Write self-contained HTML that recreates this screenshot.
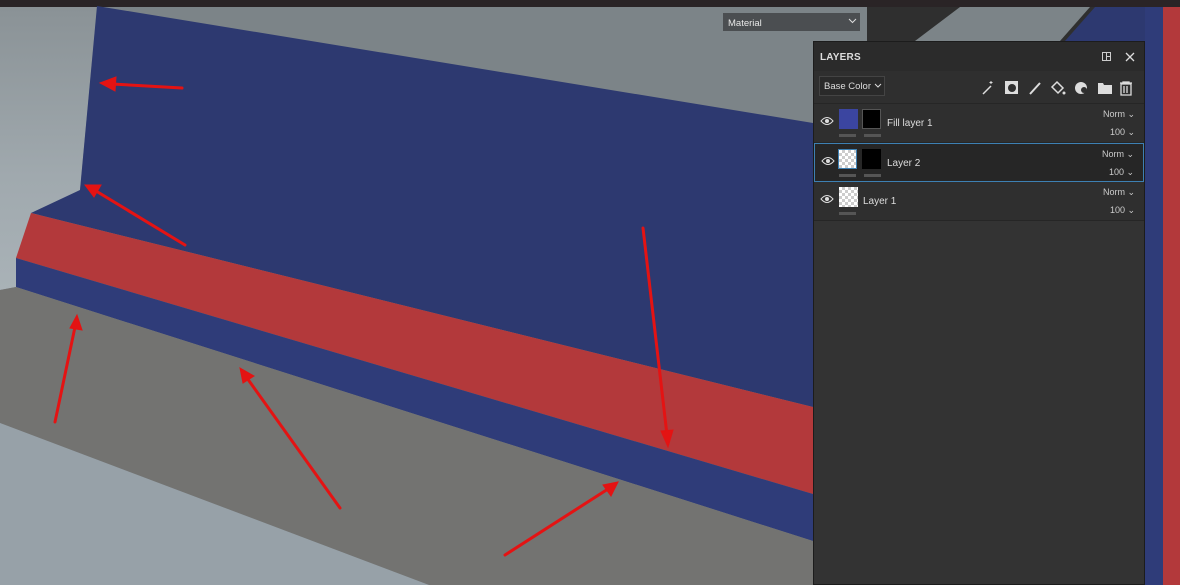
<!DOCTYPE html>
<html><head><meta charset="utf-8"><style>
*{margin:0;padding:0;box-sizing:border-box}
body{width:1180px;height:585px;overflow:hidden;background:#2e2e2e;font-family:"Liberation Sans",sans-serif;position:relative}
.abs{position:absolute}
.panel{left:813px;top:41px;width:332px;height:544px;background:#333333;border:1px solid #1c1c1c;color:#ddd}
.hdr{height:29px;background:#2b2b2b;font-size:10px;font-weight:bold;padding:10px 0 0 6px;letter-spacing:0.2px;position:relative}
.tb{height:33px;background:#2f2f2f;border-bottom:1px solid #262626;position:relative}
.dd{position:absolute;left:5px;top:5px;width:66px;height:20px;border:1px solid #444;background:#2a2a2a;font-size:9.5px;padding:4px 0 0 4px;color:#ddd;white-space:nowrap}
.row{height:39px;position:relative;border-bottom:1px solid #262626;background:#2f2f2f}
.row.sel{background:#262626;border:1px solid #3d80b3}
.eye{position:absolute;left:6px;top:12px}
.th{position:absolute;width:19px;height:20px;top:5px}
.chk{background-color:#fff;background-image:linear-gradient(45deg,#ccc 25%,transparent 25%,transparent 75%,#ccc 75%),linear-gradient(45deg,#ccc 25%,transparent 25%,transparent 75%,#ccc 75%);background-size:6px 6px;background-position:0 0,3px 3px}
.bar{position:absolute;width:17px;height:3px;background:#555;top:30px}
.nm{position:absolute;top:14px;font-size:10px;color:#ddd}
.norm{position:absolute;right:9px;top:5px;font-size:9px;color:#ccc}
.pct{position:absolute;right:9px;top:23px;font-size:9px;color:#ccc}
</style></head><body>
<svg class="abs" style="left:0;top:0" width="1180" height="585">
<defs><linearGradient id="lg" x1="0" y1="0" x2="0" y2="1"><stop offset="0" stop-color="#8a9296"/><stop offset="0.6" stop-color="#a0a9ae"/><stop offset="1" stop-color="#a9b2b7"/></linearGradient></defs>
<rect width="1180" height="585" fill="#2e2e2e"/>
<rect x="0" y="0" width="1180" height="7" fill="#2a2426"/>
<rect x="0" y="7" width="867" height="578" fill="#7c8488"/>
<polygon points="0,7 97,7 80,190 40,213 16,258 16,287 0,290" fill="url(#lg)"/>
<polygon points="97,6 813,123 813,407 31,213 80,190" fill="#2d3970"/>
<polygon points="31,213 813,407 813,494 16,258" fill="#b3393b"/>
<polygon points="16,258 813,494 813,541 16,287" fill="#2f3c79"/>
<polygon points="16,287 813,541 813,585 429,585 0,423 0,290" fill="#737371"/>
<polygon points="0,423 429,585 0,585" fill="#97a1a8"/>
<rect x="723" y="13" width="137" height="18" fill="#4b4e51"/>
<text x="728" y="26" font-family="Liberation Sans" font-size="9.5" fill="#e8e8e8">Material</text>
<path d="M849 19l3.5 3.5 3.5-3.5" stroke="#ddd" fill="none"/>
<rect x="867" y="7" width="313" height="578" fill="#2f2f2f"/>
<polygon points="960,7 1090,7 1060,41 915,41" fill="#7c8488"/>
<polygon points="1095,7 1145,7 1145,41 1065,41" fill="#2d3970"/>
<rect x="1145" y="7" width="18" height="578" fill="#2f3c79"/>
<rect x="1163" y="7" width="17" height="578" fill="#b3393b"/>
<g stroke="#e41313" stroke-width="3" fill="#e41313" stroke-linecap="round">
<line x1="182" y1="88" x2="112" y2="84"/><polygon points="100,83 116,77 115,91" stroke-width="1"/>
<line x1="185" y1="245" x2="96" y2="191"/><polygon points="85,185 101,185 94,197" stroke-width="1"/>
<line x1="55" y1="422" x2="75" y2="327"/><polygon points="77,315 82,330 70,328" stroke-width="1"/>
<line x1="340" y1="508" x2="247" y2="378"/><polygon points="240,368 254,376 243,383" stroke-width="1"/>
<line x1="505" y1="555" x2="608" y2="489"/><polygon points="618,482 611,496 603,485" stroke-width="1"/>
<line x1="643" y1="228" x2="667" y2="435"/><polygon points="668,447 661,431 673,430" stroke-width="1"/>
</g>
</svg>
<div class="abs panel">
<div class="hdr">LAYERS
<svg class="abs" style="left:287px;top:9px" width="12" height="12"><rect x="1.5" y="1.5" width="8" height="8" fill="none" stroke="#ccc"/><path d="M5.5 1.5v8M5.5 5.5h4" stroke="#ccc"/></svg>
<svg class="abs" style="left:310px;top:9px" width="12" height="12"><path d="M2 2l8 8M10 2l-8 8" stroke="#ddd" stroke-width="1.3"/></svg>
</div>
<div class="tb"><div class="dd">Base Color</div>
<svg class="abs" style="left:60px;top:12px" width="8" height="6"><path d="M1 1l3 3 3-3" stroke="#ddd" fill="none"/></svg>
<svg class="abs" style="left:166px;top:7px" width="160" height="20" fill="#ddd" stroke="#ddd">
<path d="M3 16l8-8" stroke-width="1.5"/><path d="M11 3v3M9.5 4.5h3" stroke-width="1"/>
<rect x="25" y="3" width="13" height="13" stroke="none"/><circle cx="32" cy="10" r="4" fill="#2f2f2f" stroke="none"/>
<path d="M50 16l10-11" stroke-width="2"/>
<path d="M77 4l6 6-5 5-6-6z" fill="none" stroke-width="1.5"/><circle cx="84" cy="15" r="1.5" stroke="none"/>
<circle cx="101" cy="10" r="6" stroke="none"/><circle cx="104" cy="12" r="3" fill="#2f2f2f" stroke="none"/>
<path d="M118 5h5l1 2h8v9h-14z" stroke="none"/>
<path d="M140 5h12M143 5v-1h6v1M141 6h10v11h-10zM144 8v7M147 8v7" fill="none" stroke-width="1.3"/>
</svg></div>
<div class="row">
<svg class="eye" width="14" height="10"><path d="M1 5q6-7 12 0q-6 7-12 0z" fill="none" stroke="#ddd"/><circle cx="7" cy="5" r="2" fill="#ddd"/></svg>
<div class="th" style="left:25px;background:#3b45a0"></div><div class="th" style="left:48px;background:#000;border:1px solid #555"></div>
<div class="bar" style="left:25px"></div><div class="bar" style="left:50px"></div>
<div class="nm" style="left:73px">Fill layer 1</div><div class="norm">Norm ⌄</div><div class="pct">100 ⌄</div></div>
<div class="row sel">
<svg class="eye" width="14" height="10"><path d="M1 5q6-7 12 0q-6 7-12 0z" fill="none" stroke="#ddd"/><circle cx="7" cy="5" r="2" fill="#ddd"/></svg>
<div class="th chk" style="left:23px;border:1px solid #3d80b3"></div><div class="th" style="left:47px;background:#000"></div>
<div class="bar" style="left:24px"></div><div class="bar" style="left:49px"></div>
<div class="nm" style="left:72px">Layer 2</div><div class="norm">Norm ⌄</div><div class="pct">100 ⌄</div></div>
<div class="row">
<svg class="eye" width="14" height="10"><path d="M1 5q6-7 12 0q-6 7-12 0z" fill="none" stroke="#ddd"/><circle cx="7" cy="5" r="2" fill="#ddd"/></svg>
<div class="th chk" style="left:25px"></div><div class="bar" style="left:25px"></div>
<div class="nm" style="left:49px">Layer 1</div><div class="norm">Norm ⌄</div><div class="pct">100 ⌄</div></div>
</div>
</body></html>
